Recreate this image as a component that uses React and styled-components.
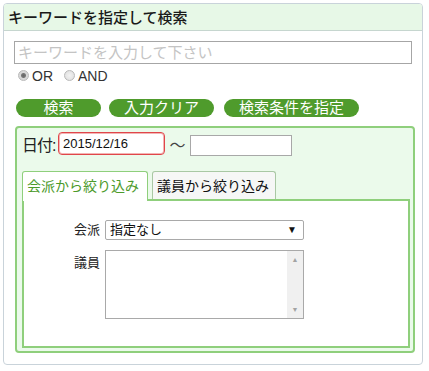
import React from 'react';
import styled, { createGlobalStyle } from 'styled-components';

const Global = createGlobalStyle`
  body {
    margin: 3px;
    background: #ffffff;
    font-family: "Liberation Sans", "Noto Sans CJK JP", sans-serif;
    color: #222;
  }
`;

const Panel = styled.section`
  width: 420px;
  height: 362px;
  box-sizing: border-box;
  border: 1px solid #c9d3da;
  border-radius: 4px;
  overflow: hidden;
`;

const Header = styled.h2`
  margin: 0;
  height: 27px;
  box-sizing: border-box;
  padding: 4px 0 0 4px;
  background: #e7f8e7;
  border-bottom: 1px solid #c6d6cf;
  font-size: 15px;
  font-weight: 500;
  line-height: 19px;
  color: #1a1a1a;
`;

const Body = styled.div`
  padding: 10px 0 0 10px;
`;

const KeywordInput = styled.input`
  display: block;
  width: 398px;
  height: 23px;
  box-sizing: border-box;
  margin: 0;
  padding: 0 3px;
  border: 1px solid #a6a6a6;
  font: inherit;
  font-size: 15px;
  outline: none;

  &::placeholder {
    color: #c4c4c4;
  }
`;

const RadioRow = styled.div`
  display: flex;
  align-items: center;
  height: 17px;
  margin-top: 3px;
  padding-left: 4px;
  font-size: 14px;
`;

const RadioItem = styled.label`
  display: flex;
  align-items: center;
  gap: 3px;
  margin-right: 11px;
  color: #333;
`;

const RadioDot = styled.span`
  width: 11px;
  height: 11px;
  box-sizing: border-box;
  border-radius: 50%;
  border: 1px solid #b9b9b9;
  background: radial-gradient(circle, ${(p) => (p.checked ? '#666 0, #777 2px, #d8d8d8 3px' : '#f2f2f2 0, #dcdcdc 100%')});
`;

const ButtonRow = styled.div`
  display: flex;
  gap: 8px;
  margin-top: 15px;
  padding-left: 2px;
`;

const PillButton = styled.button`
  width: ${(p) => p.w}px;
  height: 18px;
  margin: 0;
  margin-left: ${(p) => p.gap || 0}px;
  padding: 0;
  border: none;
  border-radius: 9px;
  background: #4f9b2c;
  color: #fff;
  font: inherit;
  font-size: 15px;
  line-height: 18px;
  cursor: pointer;
`;

const Fieldset = styled.div`
  width: 400px;
  height: 227px;
  box-sizing: border-box;
  margin-top: 9px;
  margin-left: 1px;
  padding: 3px 4px 0 5px;
  border: 2px solid #8fcf7c;
  border-radius: 4px;
  background: #ebfaeb;
`;

const DateRow = styled.div`
  display: flex;
  align-items: center;
  height: 25px;
  font-size: 16px;
  white-space: nowrap;
`;

const DateLabel = styled.span`
  width: 36px;
  flex: none;
  color: #222;
  letter-spacing: -1px;
`;

const DateInput = styled.input`
  width: ${(p) => p.w}px;
  height: ${(p) => (p.focused ? 23 : 21)}px;
  box-sizing: border-box;
  margin: 0;
  padding: 0 4px;
  border: 1px solid ${(p) => (p.focused ? '#e0464a' : '#a8a8a8')};
  border-radius: ${(p) => (p.focused ? 4 : 0)}px;
  box-shadow: ${(p) => (p.focused ? 'inset 0 0 0 1px #f3b4b4' : 'none')};
  font-family: "Liberation Sans", sans-serif;
  font-size: 13px;
  color: #111;
  outline: none;
  align-self: ${(p) => (p.focused ? 'center' : 'flex-end')};
`;

const Tilde = styled.span`
  width: 25px;
  text-align: center;
  font-size: 16px;
  color: #444;
`;

const Tabs = styled.div`
  display: flex;
  gap: 4px;
  margin-top: 15px;
  height: 28px;
  position: relative;
  z-index: 1;
`;

const Tab = styled.div`
  box-sizing: border-box;
  width: ${(p) => p.w}px;
  height: ${(p) => (p.active ? 30 : 28)}px;
  padding-top: 5px;
  padding-left: 4px;
  border: 1px solid ${(p) => (p.active ? '#8fcf7c' : '#a9c8a4')};
  border-bottom: none;
  border-radius: 3px 3px 0 0;
  background: ${(p) => (p.active ? '#ffffff' : '#f6f7f6')};
  color: ${(p) => (p.active ? '#4c9a2b' : '#111')};
  font-size: 14px;
  line-height: 18px;
  white-space: nowrap;
`;

const TabPanel = styled.div`
  width: 388px;
  height: 149px;
  box-sizing: border-box;
  border: 2px solid #8fcf7c;
  background: #fff;
  padding: 19px 0 0 0;
  display: grid;
  grid-template-columns: 76px 199px;
  column-gap: 5px;
  row-gap: 10px;
  align-content: start;
`;

const FieldLabel = styled.span`
  text-align: right;
  font-size: 13px;
  line-height: 20px;
  color: #222;
  padding-top: ${(p) => p.top || 0}px;
`;

const SelectBox = styled.div`
  position: relative;
  height: 20px;
  box-sizing: border-box;
  border: 1px solid #a9a9a9;
  border-radius: 2px;
  padding-left: 4px;
  font-size: 13px;
  line-height: 18px;
  color: #111;
`;

const Arrow = styled.span`
  position: absolute;
  right: 6px;
  top: 0;
  font-size: 10px;
  line-height: 18px;
  color: #111;
`;

const ListBox = styled.div`
  height: 69px;
  box-sizing: border-box;
  border: 1px solid #a9a9a9;
  display: flex;
  justify-content: flex-end;
`;

const ScrollTrack = styled.div`
  width: 16px;
  background: #f0f0f0;
  display: flex;
  flex-direction: column;
  justify-content: space-between;
  align-items: center;
  padding: 5px 0 4px;
  font-size: 7px;
  line-height: 8px;
  color: #a3a3a3;
`;

export default function App() {
  return (
    <>
      <Global />
      <Panel>
        <Header>キーワードを指定して検索</Header>
        <Body>
          <KeywordInput placeholder="キーワードを入力して下さい" />
          <RadioRow>
            <RadioItem>
              <RadioDot checked />
              OR
            </RadioItem>
            <RadioItem>
              <RadioDot />
              AND
            </RadioItem>
          </RadioRow>
          <ButtonRow>
            <PillButton w={85}>検索</PillButton>
            <PillButton w={105}>入力クリア</PillButton>
            <PillButton w={135} gap={2}>検索条件を指定</PillButton>
          </ButtonRow>
          <Fieldset>
            <DateRow>
              <DateLabel>日付:</DateLabel>
              <DateInput w={107} focused defaultValue="2015/12/16" />
              <Tilde>〜</Tilde>
              <DateInput w={102} />
            </DateRow>
            <Tabs>
              <Tab w={126} active>会派から絞り込み</Tab>
              <Tab w={124}>議員から絞り込み</Tab>
            </Tabs>
            <TabPanel>
              <FieldLabel>会派</FieldLabel>
              <SelectBox>
                指定なし
                <Arrow>▼</Arrow>
              </SelectBox>
              <FieldLabel top={3}>議員</FieldLabel>
              <ListBox>
                <ScrollTrack>
                  <span>▲</span>
                  <span>▼</span>
                </ScrollTrack>
              </ListBox>
            </TabPanel>
          </Fieldset>
        </Body>
      </Panel>
    </>
  );
}
